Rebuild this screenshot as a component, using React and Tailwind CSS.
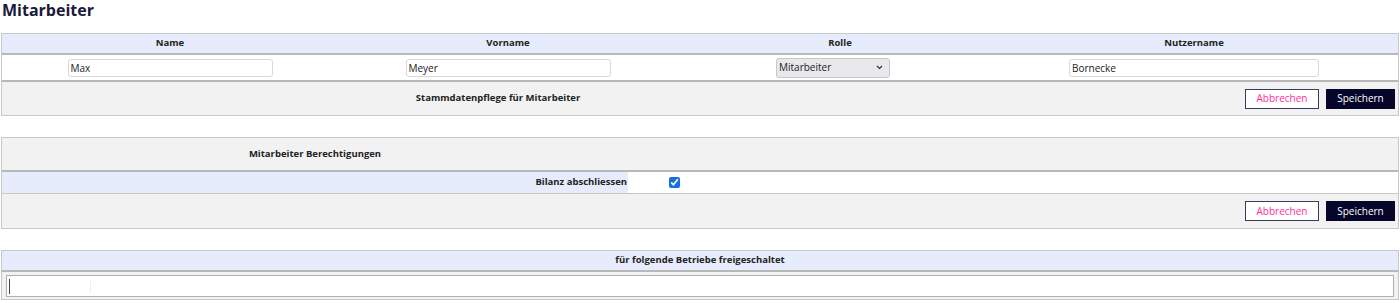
import React from 'react';

const font = 'font-["Open_Sans",sans-serif]';

function Buttons() {
  return (
    <div className="flex items-center gap-[7px]">
      <button className="h-[20px] w-[74px] border border-[#3a3a5a] bg-white text-[10px] text-[#ff2d9b]">
        Abbrechen
      </button>
      <button className="h-[20px] w-[69px] bg-[#06062a] text-[10px] text-white">
        Speichern
      </button>
    </div>
  );
}

export default function App() {
  return (
    <div className={`${font} bg-white text-[#222] w-[1400px] h-[303px] overflow-hidden`}>
      <h1 className="px-[2px] pt-[1px] text-[16px] font-bold leading-[18px] text-[#1a1a3a]">Mitarbeiter</h1>

      {/* Stammdaten */}
      <div className="mt-[14px] mx-[1px] border border-[#c8c8c8]">
        <div className="grid grid-cols-[336px_340px_324px_1fr] h-[21px] items-center bg-[#e6ecfc] border-b-2 border-[#b8b8b8] text-[9.5px] font-bold">
          <div className="text-center">Name</div>
          <div className="text-center">Vorname</div>
          <div className="text-center">Rolle</div>
          <div className="text-center pr-[12px]">Nutzername</div>
        </div>
        <div className="grid grid-cols-[336px_340px_324px_1fr] h-[27px] items-center bg-white border-b-2 border-[#b8b8b8] text-[10px]">
          <div className="flex justify-center">
            <input readOnly value="Max" className="h-[18px] w-[205px] rounded-[3px] border border-[#d8d8d8] px-[2px] text-[10px] outline-none" />
          </div>
          <div className="flex justify-center">
            <input readOnly value="Meyer" className="h-[18px] w-[205px] rounded-[3px] border border-[#d8d8d8] px-[2px] text-[10px] outline-none" />
          </div>
          <div className="flex justify-center pr-[14px]">
            <div className="flex h-[20px] w-[114px] items-center justify-between rounded-[3px] border border-[#c8c8c8] bg-[#e9e9ed] pl-[2px] pr-[6px] text-[10px]">
              <span>Mitarbeiter</span>
              <svg width="7" height="5" viewBox="0 0 7 5"><path d="M1 1l2.5 2.5L6 1" fill="none" stroke="#333" strokeWidth="1.2" /></svg>
            </div>
          </div>
          <div className="flex justify-center pr-[12px]">
            <input readOnly value="Bornecke" className="h-[18px] w-[250px] rounded-[3px] border border-[#d8d8d8] px-[2px] text-[10px] outline-none" />
          </div>
        </div>
        <div className="grid grid-cols-[992px_1fr] h-[33px] items-center bg-[#f2f2f2]">
          <div className="text-center text-[9.5px] font-bold">Stammdatenpflege für Mitarbeiter</div>
          <div className="flex justify-end pr-[3px]">
            <Buttons />
          </div>
        </div>
      </div>

      {/* Berechtigungen */}
      <div className="mt-[21px] mx-[1px] border border-[#c8c8c8]">
        <div className="grid grid-cols-[626px_1fr] h-[34px] items-center bg-[#f2f2f2] border-b-2 border-[#b8b8b8]">
          <div className="text-center text-[9.5px] font-bold">Mitarbeiter Berechtigungen</div>
          <div />
        </div>
        <div className="grid grid-cols-[626px_92px_1fr] h-[22px] items-center border-b border-[#c8c8c8]">
          <div className="h-full flex items-center justify-end bg-[#e6ecfc] pr-[1px] text-[9.5px] font-bold">Bilanz abschliessen</div>
          <div className="flex justify-center">
            <input type="checkbox" readOnly checked className="h-[11px] w-[11px] accent-[#1a6fe0]" />
          </div>
          <div />
        </div>
        <div className="flex h-[34px] items-center justify-end bg-[#f2f2f2] pr-[3px]">
          <Buttons />
        </div>
      </div>

      {/* Betriebe */}
      <div className="mt-[21px] mx-[1px] border border-[#c8c8c8]">
        <div className="flex h-[21px] items-center justify-center bg-[#e6ecfc] border-b-2 border-[#b8b8b8] text-[9.5px] font-bold">
          für folgende Betriebe freigeschaltet
        </div>
        <div className="bg-[#f2f2f2] px-[4px] pt-[3px] pb-[2px]">
          <div className="flex h-[22px] items-center border border-[#b0b0b0] bg-white pl-[2px]">
            <div className="h-[15px] w-[1px] bg-[#444]" />
            <div className="ml-[80px] h-[13px] w-[1px] bg-[#f0f0f0]" />
          </div>
        </div>
      </div>
    </div>
  );
}
